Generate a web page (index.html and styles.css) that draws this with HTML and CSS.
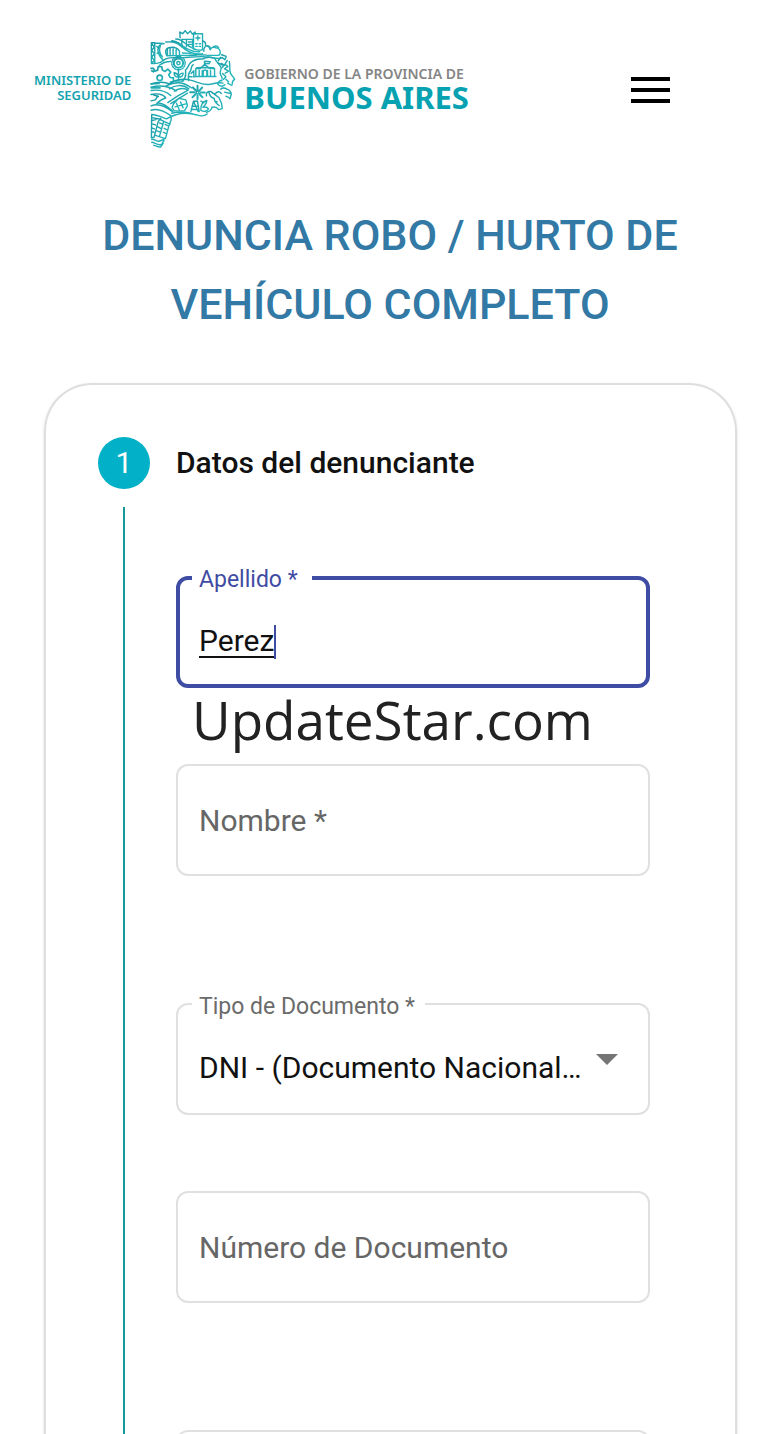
FILE: index.html
```html
<!DOCTYPE html>
<html lang="es">
<head>
<meta charset="utf-8">
<meta name="viewport" content="width=device-width, initial-scale=1">
<title>Denuncia robo / hurto de vehículo completo</title>
<link rel="stylesheet" href="styles.css">
</head>
<body>
<div class="page">
  <header class="header">
    <a class="brand" href="#">
      <span class="ministry">MINISTERIO DE<br>SEGURIDAD</span>
      <svg class="map" viewBox="30 20 260 365" aria-hidden="true">
        <defs><linearGradient id="sea" x1="0" y1="0" x2="1" y2="1"><stop offset="0" stop-color="#159aa5"/><stop offset=".5" stop-color="#25adb5"/><stop offset="1" stop-color="#20b9be"/></linearGradient></defs>
        <g fill="none" stroke="url(#sea)" stroke-width="4.2" stroke-linecap="round" stroke-linejoin="round">
          <path d="M123 52l-1-17 9 5 7-9 7 9 9-8 5 9 9-6v7M163 86V40h27v48M128 79V57h32v22M142 59v19M148 65h8M148 72h8M170 53h12M176 47v12M170 70h4M180 70h4M170 78h4M180 78h4"/>
          <path d="M80 65c22-2 34 2 48 14 16 14 36 25 62 21M110 56c20 0 28 16 46 25 12 7 20 9 32 8M98 61c20 2 25 11 38 19 16 11 30 15 48 14" stroke-dasharray="16 3"/>
          <path d="M191 62c7 1 9 7 8 14 7 0 12 4 13 10M194 93c-2-10 4-17 11-17 6 0 9 6 8 12 3-8 11-9 16-6 8 0 14 6 14 14 0 6-4 9-8 9h-30M238 82c-2-6-13-7-17-1"/>
          <path d="M37 67h10v62H37zM38 70l8 10-8 10 8 10-8 10 8 10-8 8M47 68c8 0 16 0 28 2M70 69c-10 5-16 15-12 27 2 10 8 18 16 25M64 76c-5 11-2 25 6 33M53 78l7 8M54 99l7-5"/>
          <path d="M81 101c-4-10 0-16 8-19 12-3 25 0 32 10v13l-38 1zM85 86v18M93 83v21M102 84v21M111 88v16M124 105h46M130 98l25 1"/>
          <path d="M47 128c9 2 17 0 24-7 10-8 24-10 38-9 28 1 58-5 87-3 23 1 31 7 50 5M60 135c9-7 20-12 34-12M151 105c19-3 37-2 51-1"/>
          <circle cx="118" cy="128" r="14" stroke-width="6"/><circle cx="118" cy="128" r="5"/><circle cx="118" cy="128" r="20" stroke-dasharray="4 4"/>
          <path d="M118 148v33M118 170c-12 0-13-8-13-13 8 1 12 6 13 13 2-8 7-12 14-12 0 7-4 12-14 12M107 182h25"/>
          <circle cx="62" cy="172" r="8" stroke-width="5"/>
          <path d="M36 144h7l4 8 9-3 1-10h11l2 10 8 4 8-7 9 9-6 8 4 8 10 1v11l-9 2M37 202h26M38 151l5 3M36 190l24-1" stroke-width="5"/>
          <path d="M129 182c13-8 11-22 10-34 7-3 8-14 15-21 9-8 22-12 36-11 11-7 25-6 36-3 4 10 12 17 19 27 3 8-4 12-2 19 2 8 9 12 5 22-6-3-10 3-13 9 6 8 15 8 22 3M149 180c-3-11-1-21 5-29 5-8-1-11 8-19"/>
          <path d="M170 164v-20h14l13-13 13 13h16v22M173 142l23-1 27 1M196 131v-9l17 2-4 6-12-2M180 149v16M189 150v15M205 150v15M214 150v15M192 166v-12c1-7 10-7 11 0v12M166 168h64M156 159l8-8v19M150 169h9"/>
          <path d="M247 103l14 5-4 10-9-7M264 120l-7 12 9 6-10 7 12 7-10 6M246 129l10 5-8 8M270 123c3 12 0 22 3 34 2 8 11 11 13 20-5 3-8 6-7 14M250 159l10 10-7 7M268 184l-8-8M244 111l-7 10M236 127l14 7M278 195l-13-7"/>
          <path d="M36 190c17-6 42-7 55 0 14-12 39-17 63-11 19 4 29 14 53 13 17-1 28-9 44-4M36 200c27-7 53-3 76 11M36 210c22-3 45 2 59 15M81 196c17-8 36-12 51-7 9 3 17 8 25 13M91 205c16-12 40-14 58 0M106 212c12-9 25-11 39-4"/>
          <path d="M36 222c15-4 36-2 44 10-12 5-21 8-29 20M36 241l13-3 7-12M43 223l15 5M36 256c18-8 41-1 63 17M36 269c17-6 37 0 60 17M38 282c13 0 29 7 44 13 28-17 57-22 91-12 11 4 23 4 31-3M54 247c20 0 33 13 47 25M98 278c24-6 50-4 72 5"/>
          <path d="M86 246l29-19 32-18M95 249l50-31M104 249l15-16 21 5 5 17-9 16h-31l-6-11zM112 248l8 19M124 244l8 18M108 259l32-9"/>
          <path d="M175 209v-13M180 211l9-10M184 216h13M181 221l9 9M175 224v12M169 221l-9 9M166 215h-13M170 210l-9-9" stroke-width="6"/><circle cx="175" cy="216" r="4" stroke-width="4"/>
          <path d="M155 273l8-31h12l5 31M159 257h18M157 267h20M163 242l14 31M185 269c-1-15 3-25 18-29-1 9-5 15-12 20 9-2 14 0 17 5-5 8-14 10-23 4M194 247l-9-5"/>
          <path d="M202 226c-3-11 4-14 13-13 4 5 8 7 14 7 3-8 12-8 17-1M209 214c2 13 7 17 16 20 1 10 5 15 15 21M225 221l14 10 8 18 2 15-11 3c-4-6-12-9-20-7-1 8-7 13-16 15M244 206c6-5 14-3 19 0 8 3 13 8 13 16l-4 13c-2-5-7-7-12-8M256 215l17 4M227 242l7 2"/>
          <path d="M38 283l-1 68 8-1 12-46 8-11M38 291l27 5M37 300l14-3M65 298l26 12-12 44-30-10M74 302l-13 46M61 307l8 3M78 311l8 4M56 319l9 4M75 323l8 4M53 331l9 3M73 335l7 3M39 310l10 3M38 322l8 3M38 333l6 2M38 356c9-2 13 9 24 5 6-1 10-4 14-7M38 365c9 0 16 10 29 7l8-13M44 374c8 1 11 6 21 5l7-11M94 302l-2 10M96 289v11"/>
        </g>
      </svg>
      <span class="government"><span class="gov-top">GOBIERNO DE LA PROVINCIA DE</span><strong class="gov-name">BUENOS AIRES</strong></span>
    </a>
    <button class="menu" type="button" aria-label="Menú"><span></span><span></span><span></span></button>
  </header>

  <h1 class="title">DENUNCIA ROBO / HURTO DE VEHÍCULO COMPLETO</h1>

  <main class="card">
    <div class="step-head"><span class="badge">1</span><h2 class="step-title">Datos del denunciante</h2></div>
    <form class="step-body">
      <div class="rail"></div>
      <div class="fields">
        <div class="group">
          <div class="field focused">
            <label for="apellido">Apellido *</label>
            <input id="apellido" type="text" value="Perez">
            <span class="caret"></span>
            <span class="watermark">UpdateStar.com</span>
          </div>
          <div class="field"><input id="nombre" type="text" placeholder="Nombre *" aria-label="Nombre"></div>
        </div>
        <div class="group">
          <div class="field select">
            <label for="tipo">Tipo de Documento *</label>
            <select id="tipo"><option>DNI - (Documento Nacional de Identidad)</option></select>
          </div>
          <div class="field"><input id="numero" type="text" placeholder="Número de Documento" aria-label="Número de Documento"></div>
        </div>
        <div class="group">
          <div class="field"><input type="text" aria-label="Campo siguiente"></div>
        </div>
      </div>
    </form>
  </main>
</div>
</body>
</html>
```
FILE: styles.css
```css
* { box-sizing: border-box; }
body { margin: 0; background: #fff; color: #111; font-family: Roboto, "Liberation Sans", sans-serif; }
.page { display: flex; flex-direction: column; height: 100vh; overflow: hidden; }
.header { flex: none; display: flex; align-items: center; justify-content: space-between; height: 180px; padding: 0 110px 0 34px; }
.brand { display: flex; align-items: center; padding-bottom: 4px; color: #14a3af; text-decoration: none; font-family: "Noto Sans", sans-serif; white-space: nowrap; }
.ministry { font-size: 13px; font-weight: 600; line-height: 15px; text-align: right; }
.map { width: 87px; height: 122px; margin: 0 8px 0 18px; }
.government { display: flex; flex-direction: column; }
.gov-top { color: #858585; font-size: 14px; font-weight: 600; line-height: 18px; }
.gov-name { color: #06a2b1; font-size: 31px; font-weight: 700; line-height: 28px; }
.menu { display: flex; flex-direction: column; gap: 7px; padding: 0; border: 0; background: none; }
.menu span { width: 39px; height: 4px; background: #000; }

.title { flex: none; margin: 21px 80px 44px; color: #3279a5; font-size: 43px; font-weight: 500; line-height: 69px; text-align: center; }

.card { flex: 1 0 auto; margin: 0 43px 0 44px; padding: 52px 85px 0 52px; border: 2px solid #dedede; border-bottom: 0; border-radius: 48px 48px 0 0; box-shadow: 0 1px 3px #0002; }
.step-head { display: flex; align-items: center; gap: 26px; height: 52px; }
.badge { display: grid; place-items: center; width: 52px; height: 52px; padding-bottom: 2px; border-radius: 50%; background: #02b0c8; color: #fff; font-size: 30px; }
.step-title { margin: 0; padding-bottom: 2px; font-size: 30px; font-weight: 500; }
.step-body { display: grid; grid-template-columns: 52px 1fr; column-gap: 26px; margin-top: 18px; }
.rail { width: 2px; justify-self: center; background: #159a9a; }
.fields { display: flex; flex-direction: column; gap: 127px; padding-top: 69px; }
.group { display: flex; flex-direction: column; gap: 76px; }
.field { position: relative; height: 112px; border: 2px solid #e0e0e0; border-radius: 12px; }
.field input, .field select { width: 100%; height: 100%; padding: 16px 21px 0; border: 0; outline: 0; background: none; color: #111; font-family: inherit; font-size: 30px; }
.field input::placeholder { color: #666; opacity: 1; }
.field input:placeholder-shown { padding-top: 0; }
.field label { position: absolute; top: -12px; left: 14px; padding: 0 10px 0 7px; background: #fff; color: #6b6b6b; font-size: 23px; line-height: 28px; }
.field.focused { border: 4px solid #3f4ca3; }
.field.focused label { top: -14px; left: 12px; padding-right: 14px; color: #3f4ca3; }
.field.focused input { padding: 16px 19px 0; text-decoration: underline; text-decoration-thickness: 3px; text-underline-offset: 5px; }
.caret { position: absolute; top: 45px; left: 94px; width: 2px; height: 34px; background: #3f4ca3; }
.watermark { position: absolute; top: 105px; left: 12px; color: #222; font-family: "Open Sans", sans-serif; font-size: 53px; line-height: 70px; white-space: nowrap; }
.select select { appearance: none; padding-right: 60px; text-overflow: ellipsis; white-space: nowrap; overflow: hidden; }
.select::after { content: ""; position: absolute; top: 49px; right: 30px; border: 11px solid transparent; border-top-color: #757575; border-bottom: 0; }
```
